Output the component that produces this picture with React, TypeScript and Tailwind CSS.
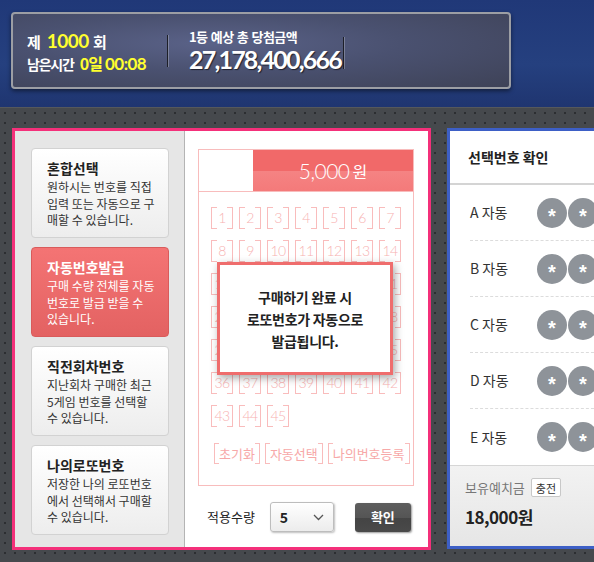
import React from "react";

const cards = [
  { title: "혼합선택", desc: ["원하시는 번호를 직접", "입력 또는 자동으로 구", "매할 수 있습니다."], active: false },
  { title: "자동번호발급", desc: ["구매 수량 전체를 자동", "번호로 발급 받을 수", "있습니다."], active: true },
  { title: "직전회차번호", desc: ["지난회차 구매한 최근", "5게임 번호를 선택할", "수 있습니다."], active: false },
  { title: "나의로또번호", desc: ["저장한 나의 로또번호", "에서 선택해서 구매할", "수 있습니다."], active: false },
];

function NumCell({ n }: { n: number }) {
  return (
    <div className="relative w-[22px] h-[22px] flex items-center justify-center border-x border-[#f9bcbc] text-[14px] text-[#f7b2b2] font-['Lato',sans-serif] font-light leading-none tracking-[-0.5px]">
      <span className="absolute left-0 top-0 w-[5px] border-t border-[#f9bcbc]" />
      <span className="absolute right-0 top-0 w-[5px] border-t border-[#f9bcbc]" />
      <span className="absolute left-0 bottom-0 w-[5px] border-b border-[#f9bcbc]" />
      <span className="absolute right-0 bottom-0 w-[5px] border-b border-[#f9bcbc]" />
      {n}
    </div>
  );
}

function BracketBtn({ label }: { label: string }) {
  return (
    <div className="relative h-[21px] px-[4px] flex items-center border-x border-[#f9bcbc] text-[13px] text-[#f7a8a8] leading-none">
      <span className="absolute left-0 top-0 w-[4px] border-t border-[#f9bcbc]" />
      <span className="absolute right-0 top-0 w-[4px] border-t border-[#f9bcbc]" />
      <span className="absolute left-0 bottom-0 w-[4px] border-b border-[#f9bcbc]" />
      <span className="absolute right-0 bottom-0 w-[4px] border-b border-[#f9bcbc]" />
      {label}
    </div>
  );
}

export default function App() {
  const nums = Array.from({ length: 45 }, (_, i) => i + 1);
  return (
    <div className="w-[594px] h-[562px] overflow-hidden font-['Noto_Sans_CJK_KR','Noto_Sans',sans-serif]">
      {/* Header */}
      <div className="h-[107px] bg-[linear-gradient(180deg,#203878_0%,#25407f_60%,#1f3570_100%)] pt-[12px] pl-[11px]">
        <div className="w-[500px] h-[77px] rounded-[4px] border-2 border-[#9c9ea4] bg-[radial-gradient(ellipse_at_40%_40%,#5a6288_0%,#4a5170_45%,#3e4257_100%)] shadow-[0_2px_4px_rgba(0,0,0,0.5)] flex items-center pl-[14px]">
          <div className="w-[140px] flex flex-col text-white font-bold">
            <div className="flex items-baseline h-[24px]">
              <span className="text-[15px]">제</span>
              <span className="ml-[6px] text-[19px] text-[#ffff2e] font-['Lato',sans-serif] font-bold tracking-[-0.5px]">1000</span>
              <span className="ml-[4px] text-[15px]">회</span>
            </div>
            <div className="flex items-baseline h-[24px]">
              <span className="text-[14px] tracking-[-1.2px]">남은시간</span>
              <span className="ml-[6px] text-[16px] text-[#ffff2e] tracking-[-1px]">0일</span>
              <span className="ml-[3px] text-[17px] text-[#ffff2e] font-['Lato',sans-serif] font-bold tracking-[-0.5px]">00:08</span>
            </div>
          </div>
          <div className="w-[1px] h-[32px] bg-[#1d1f28] shadow-[1px_0_0_rgba(255,255,255,0.25)]" />
          <div className="ml-[21px] flex flex-col text-white">
            <span className="text-[13px] font-bold leading-[16px] tracking-[-0.6px] [word-spacing:1px]">1등 예상 총 당첨금액</span>
            <span className="text-[25px] font-['Lato',sans-serif] font-bold leading-[28px] tracking-[-1.8px] [text-shadow:1px_1px_1px_rgba(0,0,0,0.6)]">27,178,400,666</span>
          </div>
          <div className="ml-[2px] mt-[4px] w-[1px] h-[32px] bg-[#1d1f28] shadow-[1px_0_0_rgba(255,255,255,0.25)]" />
        </div>
      </div>

      {/* Main */}
      <div className="h-[455px] border-t border-[#55585c] bg-[#46494d] bg-[radial-gradient(#2c2e31_1.1px,transparent_1.5px)] bg-[length:10px_10px] pt-[20px] pl-[12px] flex gap-[16px]">
        {/* Pink panel */}
        <div className="w-[419px] h-[422px] border-[3px] border-[#f4307a] flex shrink-0">
          <div className="w-[170px] bg-[#e6e6e6] border-r border-[#b4b4b4] flex flex-col gap-[9px] pt-[17px] pl-[16px]">
            {cards.map((c) => (
              <div
                key={c.title}
                className={
                  c.active
                    ? "w-[138px] h-[90px] rounded-[4px] border border-[#d95b5b] bg-[linear-gradient(180deg,#f47474_0%,#e36262_100%)] pl-[15px] pt-[9px] text-white"
                    : "w-[138px] h-[90px] rounded-[4px] border border-[#d2d2d2] bg-[linear-gradient(180deg,#ffffff_0%,#ededed_100%)] pl-[15px] pt-[9px] text-[#222]"
                }
              >
                <div className="text-[14px] font-bold leading-[20px]">{c.title}</div>
                <div className={c.active ? "mt-[1px] text-[12px] leading-[16.5px] text-white" : "mt-[1px] text-[12px] leading-[16.5px] text-[#333]"}>
                  {c.desc.map((d) => (
                    <div key={d}>{d}</div>
                  ))}
                </div>
              </div>
            ))}
          </div>
          <div className="flex-1 bg-white pt-[18px] pl-[13px] flex flex-col">
            {/* Ticket */}
            <div className="relative w-[216px] h-[337px] border border-[#f8bcbc] flex flex-col">
              <div className="h-[42px] flex border-b border-[#f8bcbc]">
                <div className="w-[54px]" />
                <div className="flex-1 flex items-center justify-center bg-[linear-gradient(180deg,#f16969_0%,#f16969_50%,#f58383_52%,#f47a7a_100%)] text-white">
                  <span className="text-[21px] font-['Lato',sans-serif] font-light tracking-[-0.5px]">5,000</span>
                  <span className="ml-[3px] text-[16px]">원</span>
                </div>
              </div>
              <div className="mt-[15px] ml-[12px] grid grid-cols-[repeat(7,22px)] gap-x-[6px] gap-y-[11px]">
                {nums.map((n) => (
                  <NumCell key={n} n={n} />
                ))}
              </div>
              <div className="mt-[16px] ml-[15px] flex gap-[5px]">
                <BracketBtn label="초기화" />
                <BracketBtn label="자동선택" />
                <BracketBtn label="나의번호등록" />
              </div>
              {/* Modal */}
              <div className="absolute left-[18px] top-[112px] w-[176px] h-[113px] border-[3px] border-[#ef6d6d] bg-white shadow-[2px_3px_8px_rgba(0,0,0,0.35)] flex flex-col items-center justify-center text-[14px] font-bold leading-[22px] text-[#222] tracking-[-0.3px]">
                <div>구매하기 완료 시</div>
                <div>로또번호가 자동으로</div>
                <div>발급됩니다.</div>
              </div>
            </div>
            <div className="mt-[16px] flex items-center h-[30px]">
              <span className="ml-[9px] text-[13px] text-[#222]">적용수량</span>
              <div className="ml-[15px] w-[64px] h-[30px] rounded-[3px] border border-[#bdbdbd] bg-[linear-gradient(180deg,#ffffff_0%,#ececec_100%)] shadow-[1px_1px_2px_rgba(0,0,0,0.25)] flex items-center justify-between px-[9px]">
                <span className="text-[14px] font-bold text-[#222]">5</span>
                <svg width="11" height="7" viewBox="0 0 11 7" fill="none">
                  <path d="M1 1l4.5 4.5L10 1" stroke="#555" strokeWidth="1.3" />
                </svg>
              </div>
              <div className="ml-[21px] w-[56px] h-[29px] rounded-[3px] bg-[linear-gradient(180deg,#5e5e5e_0%,#555_50%,#444_52%,#4a4a4a_100%)] shadow-[1px_1px_2px_rgba(0,0,0,0.4)] flex items-center justify-center text-white text-[13px] font-bold">
                확인
              </div>
            </div>
          </div>
        </div>

        {/* Blue panel */}
        <div className="w-[160px] h-[421px] border-[3px] border-[#3d5fc6] bg-white flex flex-col shrink-0">
          <div className="h-[54px] border-b-2 border-[#d4d4d4] flex items-center pl-[18px] text-[14px] font-bold text-[#222]">
            선택번호 확인
          </div>
          {["A", "B", "C", "D", "E"].map((l, i) => (
            <div
              key={l}
              className={
                i < 4
                  ? "h-[56px] flex items-center border-b border-dashed border-[#dcdcdc] ml-[20px]"
                  : "h-[56px] flex items-center ml-[20px]"
              }
            >
              <span className="w-[67px] text-[14px] text-[#333]">{l} 자동</span>
              <div className="flex gap-[1px]">
                {[0, 1].map((k) => (
                  <div key={k} className="w-[30px] h-[30px] rounded-full bg-[#8e9399] flex items-center justify-center text-white text-[20px] font-bold leading-none pt-[7px] font-['Liberation_Sans',sans-serif]">
                    *
                  </div>
                ))}
              </div>
            </div>
          ))}
          <div className="flex-1 border-t border-[#d6d6d6] bg-[linear-gradient(180deg,#f2f2f2_0%,#e6e6e6_100%)] pl-[15px] pt-[12px]">
            <div className="flex items-center">
              <span className="text-[13px] text-[#777]">보유예치금</span>
              <span className="ml-[6px] h-[19px] px-[4px] rounded-[2px] border border-[#c8c8c8] bg-white text-[11px] text-[#333] flex items-center">충전</span>
            </div>
            <div className="mt-[6px] text-[17px] font-bold text-[#222] tracking-[-0.5px]">18,000원</div>
          </div>
        </div>
      </div>
    </div>
  );
}
